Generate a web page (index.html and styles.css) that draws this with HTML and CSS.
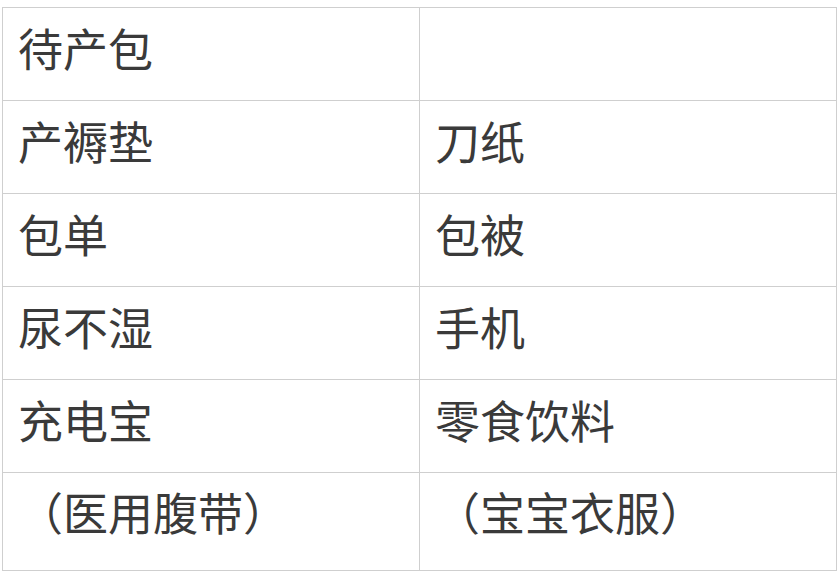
FILE: index.html
```html
<!DOCTYPE html>
<html lang="zh-CN">
<head>
<meta charset="utf-8">
<link rel="stylesheet" href="styles.css">
</head>
<body>
<table class="list">
  <tr><td>待产包</td><td></td></tr>
  <tr><td>产褥垫</td><td>刀纸</td></tr>
  <tr><td>包单</td><td>包被</td></tr>
  <tr><td>尿不湿</td><td>手机</td></tr>
  <tr><td>充电宝</td><td>零食饮料</td></tr>
  <tr class="last"><td>（医用腹带）</td><td>（宝宝衣服）</td></tr>
</table>
</body>
</html>
```
FILE: styles.css
```css
html, body {
  margin: 0;
  padding: 0;
  background: #ffffff;
}
body {
  padding: 7px 2px 0 2px;
}
.list {
  border-collapse: collapse;
  width: 835px;
  table-layout: fixed;
  font-family: "Noto Sans CJK SC", "Noto Sans", sans-serif;
  font-size: 45px;
  color: #3a3a3a;
}
.list td {
  border: 1px solid #cfcfcf;
  height: 93px;
  padding: 0 0 14px 15px;
  vertical-align: middle;
  line-height: 1;
  box-sizing: border-box;
}
.list td:first-child {
  width: 417px;
}
.list .last td {
  height: 98px;
  padding-bottom: 21px;
}
```
